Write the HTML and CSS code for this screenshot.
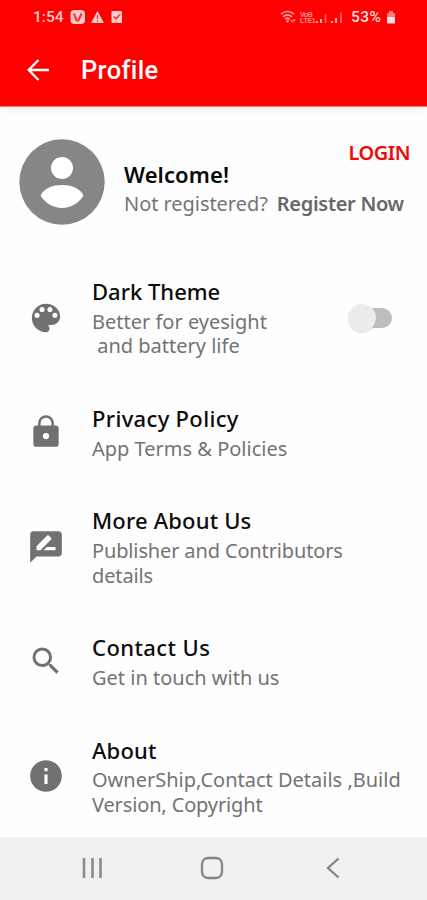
FILE: index.html
```html
<!DOCTYPE html>
<html lang="en">
<head>
<meta charset="utf-8">
<title>Profile</title>
<link rel="stylesheet" href="styles.css">
</head>
<body>
<div class="screen">
  <header class="top">
    <div class="status">
      <span class="clock">1:54</span>
      <svg class="st-left" width="54" height="16" viewBox="0 0 54 16">
        <rect x="0.5" y="1" width="14.5" height="14" rx="4" fill="#ffc9c9"/>
        <path d="M4 4.500l2.200 6.200c.5 1.300 2 1.300 2.600 0L11.500 4.500" fill="none" stroke="#f33" stroke-width="2.200"/>
        <path d="M27.500 2L34 14H21z" fill="#ffc9c9"/>
        <path d="M27.500 6v4M27.500 11.200v1.500" stroke="#f33" stroke-width="1.300"/>
        <rect x="41.500" y="2" width="10.500" height="12" rx="1" fill="#ffc9c9"/>
        <path d="M43.800 7.500l2.200 2.300 4-4.300" fill="none" stroke="#f33" stroke-width="1.600"/>
      </svg>
      <svg class="st-right" width="64" height="16" viewBox="0 0 64 16">
        <g fill="none" stroke="#ff9c9c" stroke-width="1.700">
          <path d="M1 5.200c4-3.600 9.200-3.600 13 0M3 7.800c2.800-2.400 6.200-2.400 9 0M5.200 10.200c1.500-1.200 3.200-1.200 4.600 0"/>
        </g>
        <path d="M7.500 14l-2-2.500h4zM10 11h2.500v3M13.500 14v-4h2z" fill="#ff9c9c"/>
        <g fill="#ff9090" class="volte"><text x="20" y="7.500">VoB</text><text x="20" y="14">LTE1</text></g>
        <path d="M37 14v-2M41 14v-4M52 14v-2M56 14v-5" stroke="#ffadad" stroke-width="2"/>
        <path d="M45.500 14V5M61 14V3.500" stroke="#ff5c5c" stroke-width="2"/>
      </svg>
      <span class="percent">53%</span>
      <svg class="battery" width="10" height="14" viewBox="0 0 10 14">
        <path d="M3 1h4v2h2v4H1V3h2z" fill="#ff8080"/><path d="M1 7h8v6.500H1z" fill="#ffe0e0"/>
      </svg>
    </div>
    <div class="bar">
      <svg class="back" width="24" height="24" viewBox="0 0 24 24"><path d="M23 12H3M12.500 2L2.700 12l9.800 10" fill="none" stroke="#fff" stroke-width="2.300"/></svg>
      <h1>Profile</h1>
    </div>
  </header>

  <main>
    <section class="account">
      <svg class="avatar" width="86" height="86" viewBox="0 0 86 86">
        <circle cx="43" cy="43" r="42.700" fill="#868686"/>
        <circle cx="43" cy="29" r="11" fill="#fff"/>
        <path d="M21.500 56.500C25 49 34 46 43 46s18 3 21.500 10.500C60 64 52 69 43 69s-17-5-21.500-12.500z" fill="#fff"/>
      </svg>
      <div class="who">
        <span class="login">LOGIN</span>
        <span class="welcome">Welcome!</span>
        <p class="hint"><span class="not">Not registered?</span><b>Register Now</b></p>
      </div>
    </section>

    <section class="row">
      <div class="icon"><svg width="34" height="34" viewBox="0 0 24 24"><path d="M12 2C6.490 2 2 6.490 2 12s4.490 10 10 10c1.380 0 2.500-1.120 2.500-2.500 0-.61-.23-1.200-.64-1.670-.08-.1-.13-.21-.13-.33 0-.28.22-.5.5-.5H16c3.310 0 6-2.690 6-6C22 6.040 17.510 2 12 2zM5.700 11.900a1.800 1.800 0 1 1 0-3.600 1.800 1.800 0 0 1 0 3.600zm3.500-4.100a1.800 1.800 0 1 1 0-3.600 1.800 1.800 0 0 1 0 3.600zm5.600 0a1.800 1.800 0 1 1 0-3.600 1.800 1.800 0 0 1 0 3.600zm3.500 4.100a1.800 1.800 0 1 1 0-3.600 1.800 1.800 0 0 1 0 3.600z"/></svg></div>
      <div class="text"><h2>Dark Theme</h2><p>Better for eyesight<br>&nbsp;and battery life</p></div>
      <div class="switch"><i></i></div>
    </section>

    <section class="row">
      <div class="icon lock"><svg width="38" height="38" viewBox="0 0 24 24"><path d="M18 8.500h-1V7A5 5 0 0 0 7 7v1.500H6a2 2 0 0 0-2 2V20a2 2 0 0 0 2 2h12a2 2 0 0 0 2-2v-9.500a2 2 0 0 0-2-2zM12 17.200a2 2 0 1 1 0-4 2 2 0 0 1 0 4zM15.400 8.500H8.600V7a3.400 3.400 0 0 1 6.800 0z"/></svg></div>
      <div class="text"><h2 class="wide">Privacy Policy</h2><p>App Terms &amp; Policies</p></div>
    </section>

    <section class="row">
      <div class="icon"><svg width="38" height="38" viewBox="0 0 24 24"><path d="M20 2H4c-1.100 0-1.990.9-1.990 2L2 22l4-4h14c1.100 0 2-.9 2-2V4c0-1.100-.9-2-2-2zM6 14v-2.470l6.880-6.880c.2-.2.510-.2.710 0l1.770 1.770c.2.2.2.510 0 .71L8.470 14H6zm12 0h-7.500l2-2H18v2z"/></svg></div>
      <div class="text"><h2 class="semiwide">More About Us</h2><p class="tight">Publisher and Contributors<br>details</p></div>
    </section>

    <section class="row">
      <div class="icon"><svg width="36" height="36" viewBox="0 0 24 24"><path d="M15.500 14h-.79l-.28-.27A6.471 6.471 0 0 0 16 9.500 6.500 6.500 0 1 0 9.500 16c1.610 0 3.090-.59 4.230-1.570l.27.28v.79l5 4.990L20.490 19l-4.990-5zm-6 0C7.010 14 5 11.990 5 9.500S7.010 5 9.500 5 14 7.010 14 9.500 11.990 14 9.500 14z"/></svg></div>
      <div class="text"><h2 class="wider">Contact Us</h2><p>Get in touch with us</p></div>
    </section>

    <section class="row">
      <div class="icon"><svg width="38" height="38" viewBox="0 0 24 24"><path d="M12 2C6.480 2 2 6.480 2 12s4.480 10 10 10 10-4.480 10-10S17.520 2 12 2zm1 15h-2v-6h2v6zm0-8h-2V7h2v2z"/></svg></div>
      <div class="text"><h2 class="semiwide">About</h2><p>OwnerShip,Contact Details ,Build<br><span class="tight">Version, Copyright</span></p></div>
    </section>
  </main>

  <nav>
    <svg width="22" height="22" viewBox="0 0 22 22"><path d="M2 1v20M10.500 1v20M18.500 1v20" stroke="#8b8b8b" stroke-width="2.600"/></svg>
    <svg width="24" height="24" viewBox="0 0 24 24"><rect x="2" y="2" width="20" height="20" rx="6" fill="none" stroke="#858585" stroke-width="2.300"/></svg>
    <svg width="14" height="22" viewBox="0 0 14 22"><path d="M12.500 1.500L2 11l10.500 9.500" fill="none" stroke="#858585" stroke-width="2.300"/></svg>
  </nav>
</div>
</body>
</html>
```
FILE: styles.css
```css
* { box-sizing: border-box; }
body { margin: 0; background: #fefefe; font-family: "Noto Sans", sans-serif; }
h1, h2, p { margin: 0; }
svg { display: block; flex: none; }
.screen { width: 427px; height: 900px; display: flex; flex-direction: column; overflow: hidden; }
.top { flex: none; height: 107px; background: #fe0000; border-bottom: 1px solid #f77; box-shadow: 0 1px 8px rgba(0,0,0,.09); }
.status { height: 34px; display: flex; align-items: center; padding-left: 33px; font-family: Roboto, sans-serif; font-size: 15.5px; color: #ffc9c9; }
.clock { width: 37px; font-weight: 500; white-space: nowrap; }
.st-right { margin-left: 156px; }
.volte { font: 700 7px "Liberation Sans", sans-serif; letter-spacing: -.3px; }
.percent { margin-left: 7px; width: 35px; font-weight: 500; color: #ffdcdc; letter-spacing: .5px; }
.bar { display: flex; align-items: center; height: 72px; padding-left: 26px; }
h1 { margin-left: 31px; font: 500 25.5px Roboto, sans-serif; letter-spacing: .35px; color: #fff; }
main { flex: 1; min-height: 0; overflow: hidden; }
.account { height: 147px; display: flex; padding: 32px 0 0 19px; }
.who { flex: 1; display: flex; flex-direction: column; padding-left: 19px; white-space: nowrap; }
.login { align-self: flex-end; margin-right: 17px; font-size: 20px; font-weight: 600; line-height: 28px; letter-spacing: -.5px; color: #f00808; }
.welcome { margin-top: -8px; font-size: 22px; font-weight: 600; line-height: 30px; letter-spacing: .1px; color: #080808; }
.hint { display: flex; gap: 9px; margin-top: 1px; font-size: 20px; line-height: 28px; color: #757575; letter-spacing: -.05px; }
.hint b { font-weight: 600; color: #686868; letter-spacing: -.3px; }
.row { display: flex; align-items: center; padding: 22px 0; }
.icon { width: 92px; display: flex; justify-content: center; flex: none; }
.icon svg { fill: #717171; }
.lock { padding-bottom: 2px; }
.text { white-space: nowrap; }
h2 { font-size: 22px; font-weight: 500; line-height: 30px; color: #0c0c0c; }
.wide { letter-spacing: .33px; }
.wider { letter-spacing: .42px; }
.semiwide { letter-spacing: .17px; }
.text p { margin-top: 3.5px; font-size: 20px; line-height: 24.75px; color: #737373; }
.tight { letter-spacing: -.14px; }
.switch { margin-left: auto; margin-right: 35px; width: 32px; height: 20px; display: flex; align-items: center; border-radius: 10px; background: #bdbdbd; }
.switch i { flex: none; width: 28px; height: 28px; margin-left: -12px; border-radius: 50%; background: #ececec; box-shadow: 0 1px 1px rgba(0,0,0,.12); }
nav { flex: none; height: 63px; display: grid; grid-template-columns: 185px 54px 187px; justify-items: center; align-items: center; padding-bottom: 1px; background: #f1f1f1; }
```
